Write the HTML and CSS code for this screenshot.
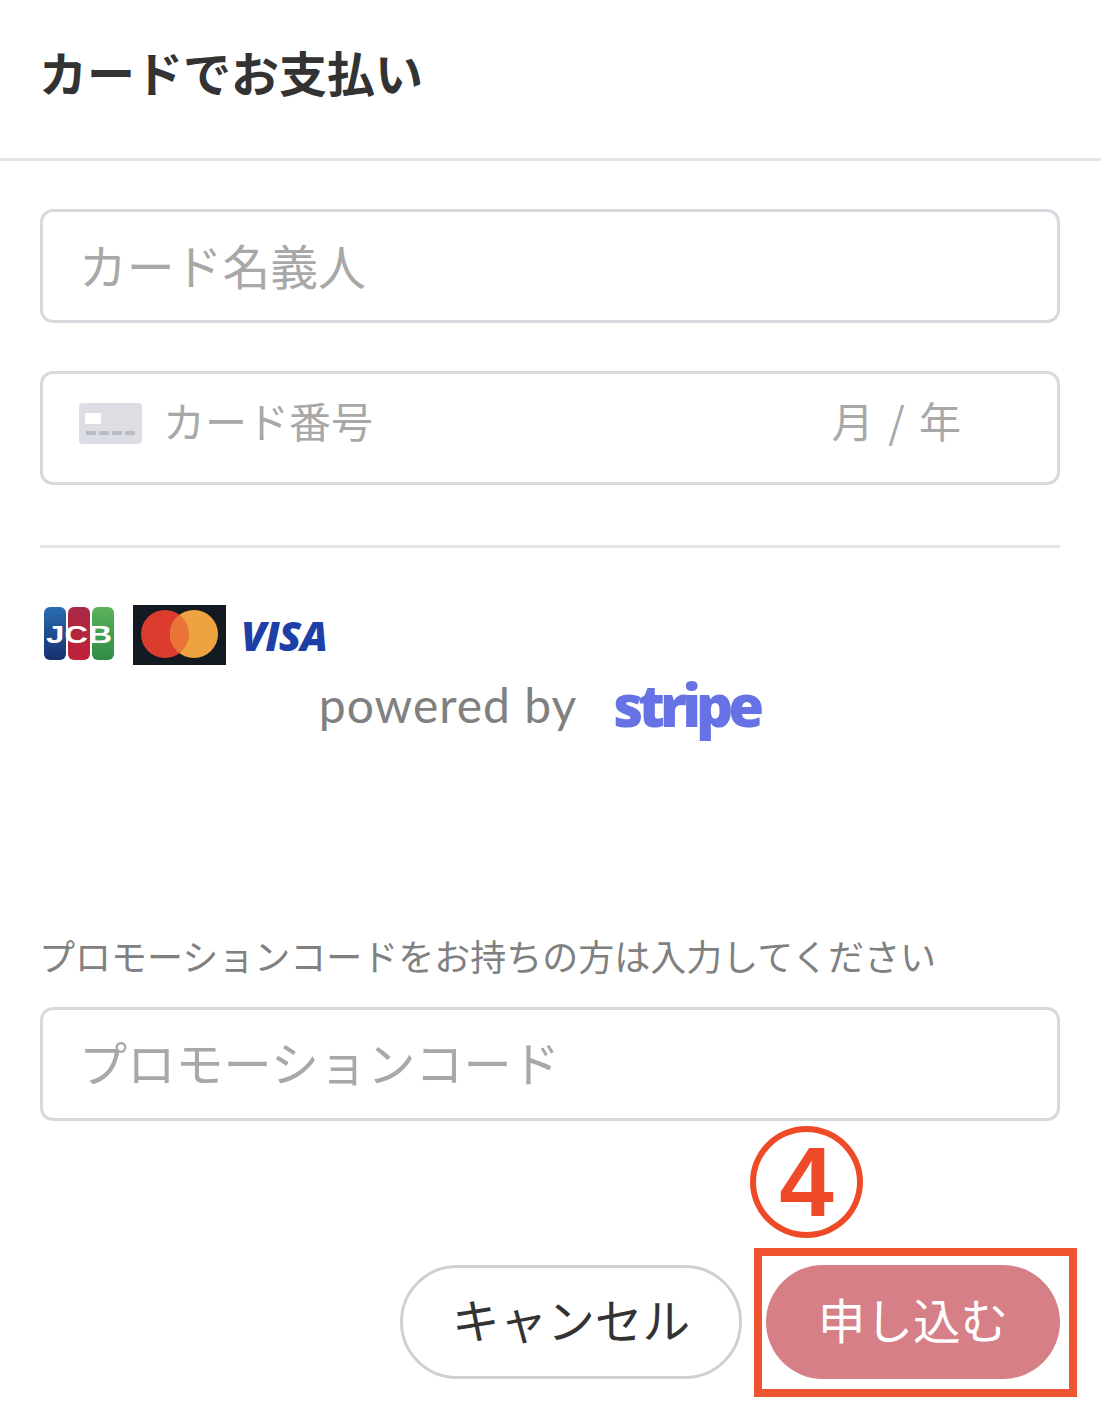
FILE: index.html
```html
<!DOCTYPE html>
<html lang="ja">
<head>
    <meta charset="UTF-8">
    <meta name="viewport" content="width=device-width, initial-scale=1.0">
    <title>カードでお支払い</title>
    <link rel="stylesheet" href="styles.css">
</head>
<body>
    <header class="head">
        <h1>カードでお支払い</h1>
    </header>

    <form class="pay-form">
        <div class="field field-name">カード名義人</div>

        <div class="field field-card">
            <svg class="card-icon" width="63" height="41" viewBox="0 0 63 41">
                <rect width="63" height="41" rx="4" fill="#dcdee4"/>
                <rect x="6" y="10" width="16" height="11" rx="1" fill="#fff"/>
                <rect x="7" y="28" width="10" height="4" rx="1" fill="#b9bbc6"/>
                <rect x="20" y="28" width="10" height="4" rx="1" fill="#b9bbc6"/>
                <rect x="33" y="28" width="10" height="4" rx="1" fill="#b9bbc6"/>
                <rect x="46" y="28" width="10" height="4" rx="1" fill="#b9bbc6"/>
            </svg>
            <span class="card-number">カード番号</span>
            <span class="card-date">月 / 年</span>
        </div>

        <hr class="divider">

        <div class="brands">
            <svg class="jcb" width="72" height="56" viewBox="0 0 72 56">
                <defs>
                    <linearGradient id="jcb-blue" x1="0" y1="0" x2="0" y2="1">
                        <stop offset="0" stop-color="#2a6db0"/>
                        <stop offset="1" stop-color="#16306f"/>
                    </linearGradient>
                    <linearGradient id="jcb-red" x1="0" y1="0" x2="0" y2="1">
                        <stop offset="0" stop-color="#a82a46"/>
                        <stop offset="1" stop-color="#bf2138"/>
                    </linearGradient>
                    <linearGradient id="jcb-green" x1="0" y1="0" x2="0" y2="1">
                        <stop offset="0" stop-color="#5cb15a"/>
                        <stop offset="1" stop-color="#2f8c45"/>
                    </linearGradient>
                </defs>
                <rect x="0" y="0" width="22" height="53" rx="6" fill="url(#jcb-blue)"/>
                <rect x="24" y="0" width="22" height="53" rx="6" fill="url(#jcb-red)"/>
                <rect x="48" y="0" width="22" height="53" rx="6" fill="url(#jcb-green)"/>
                <text class="jcb-text" x="2" y="36" textLength="66" lengthAdjust="spacingAndGlyphs">JCB</text>
            </svg>
            <svg class="mastercard" width="93" height="60" viewBox="0 0 93 60">
                <rect width="93" height="60" fill="#141a22"/>
                <circle cx="32" cy="29" r="24" fill="#dc3c2e"/>
                <circle cx="61" cy="29" r="24" fill="#eda33f"/>
                <path d="M46.500 9.800a24 24 0 0 1 0 38.400a24 24 0 0 1 0-38.400z" fill="#ea7437"/>
            </svg>
            <span class="visa">VISA</span>
        </div>

        <div class="powered">
            <span class="powered-by">powered by</span>
            <span class="stripe">stripe</span>
        </div>

        <p class="promo-label">プロモーションコードをお持ちの方は入力してください</p>
        <div class="field field-promo">プロモーションコード</div>

        <div class="actions">
            <button type="button" class="btn btn-cancel">キャンセル</button>
            <span class="submit-wrap">
                <span class="step-mark">4</span>
                <button type="button" class="btn btn-submit">申し込む</button>
            </span>
        </div>
    </form>
</body>
</html>
```

FILE: styles.css
```css
body {
    margin: 0;
    background: #fff;
    font-family: "Noto Sans CJK JP", "Liberation Sans", sans-serif;
    color: #333;
}

.head {
    height: 161px;
    box-sizing: border-box;
    border-bottom: 3px solid #e4e4e7;
    padding: 39px 0 0 39px;
}

.head h1 {
    margin: 0;
    font-size: 48px;
    line-height: 64px;
    font-weight: 700;
    color: #333;
}

.pay-form {
    padding: 48px 41px 36px 40px;
}

.field {
    box-sizing: border-box;
    height: 114px;
    border: 3px solid #d8d9df;
    border-radius: 13px;
    color: #a8a8a8;
    display: flex;
    align-items: center;
}

.field-name {
    padding: 0 0 4px 36px;
    font-size: 47.800px;
}

.field-card {
    margin-top: 48px;
    padding: 0 0 18px 36px;
    font-size: 42px;
}

.card-icon {
    margin-right: 21px;
    margin-top: 8px;
}

.card-date {
    margin-left: auto;
    margin-right: 96px;
    font-size: 42px;
    word-spacing: 5px;
}

.divider {
    margin: 60px 0 0;
    border: none;
    border-top: 3px solid #e6e6e9;
}

.brands {
    margin-top: 57px;
    height: 60px;
    display: flex;
    align-items: center;
    padding-left: 4px;
}

.jcb {
    margin-right: 17px;
}

.jcb-text {
    font-family: "Liberation Sans", sans-serif;
    font-size: 24px;
    font-weight: 700;
    fill: #fff;
}

.mastercard {
    margin-right: 15px;
}

.visa {
    font-family: "Open Sans", "Liberation Sans", sans-serif;
    font-size: 41px;
    font-weight: 800;
    font-style: italic;
    color: #1f3fa8;
    letter-spacing: -1px;
}

.powered {
    margin-top: 1px;
    height: 76px;
    display: flex;
    align-items: center;
    justify-content: center;
    padding-right: 22px;
}

.powered-by {
    font-family: Lato, "Liberation Sans", sans-serif;
    font-size: 48px;
    font-weight: 400;
    color: #808080;
    letter-spacing: 1px;
}

.stripe {
    margin-left: 36px;
    font-family: "Open Sans", "Liberation Sans", sans-serif;
    font-size: 58px;
    font-weight: 800;
    color: #6772e5;
    letter-spacing: -5px;
}

.promo-label {
    margin: 188px 0 0 -1px;
    font-size: 36px;
    line-height: 50px;
    color: #808080;
    white-space: nowrap;
}

.field-promo {
    margin-top: 27px;
    padding: 0 0 6px 36px;
    font-size: 48.200px;
}

.actions {
    margin-top: 144px;
    display: flex;
    justify-content: flex-end;
    gap: 24px;
}

.btn {
    height: 114px;
    border-radius: 57px;
    font-family: inherit;
    font-size: 47.600px;
    padding: 0 0 8px;
}

.btn-cancel {
    width: 342px;
    background: #fff;
    border: 3px solid #d0d0d0;
    color: #333;
}

.btn-submit {
    display: block;
    width: 294px;
    background: #d67f87;
    border: none;
    color: #fff;
}

.submit-wrap {
    position: relative;
    display: block;
}

/* red box drawn over the screenshot */
.submit-wrap::after {
    content: "";
    position: absolute;
    left: -12px;
    top: -17px;
    width: 323px;
    height: 149px;
    box-sizing: border-box;
    border: 8px solid #ee5430;
}

.step-mark {
    position: absolute;
    left: -16px;
    top: -139px;
    width: 113px;
    height: 112px;
    box-sizing: border-box;
    border: 6px solid #ee4a28;
    border-radius: 50%;
    color: #ee4a28;
    font-family: "Liberation Sans", sans-serif;
    font-size: 98px;
    font-weight: 700;
    line-height: 100px;
    text-align: center;
}
```
